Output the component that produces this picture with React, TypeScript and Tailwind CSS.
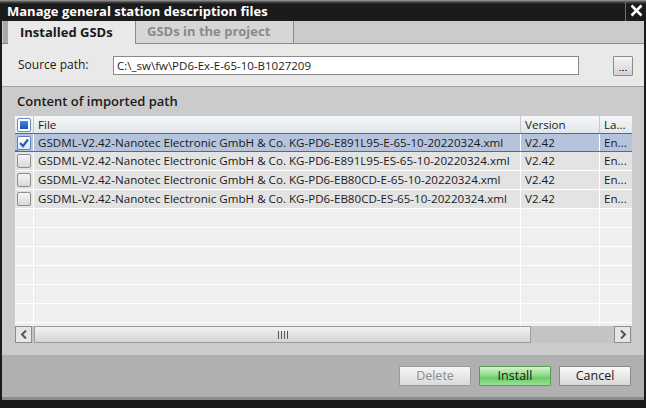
import React from "react";

const rows = [
  "GSDML-V2.42-Nanotec Electronic GmbH & Co. KG-PD6-E891L95-E-65-10-20220324.xml",
  "GSDML-V2.42-Nanotec Electronic GmbH & Co. KG-PD6-E891L95-ES-65-10-20220324.xml",
  "GSDML-V2.42-Nanotec Electronic GmbH & Co. KG-PD6-EB80CD-E-65-10-20220324.xml",
  "GSDML-V2.42-Nanotec Electronic GmbH & Co. KG-PD6-EB80CD-ES-65-10-20220324.xml",
];

function Box({ checked }: { checked?: boolean }) {
  return (
    <div
      className={
        "w-[14px] h-[14px] rounded-[2px] border flex items-center justify-center " +
        (checked
          ? "border-[#5a7fbf] bg-[linear-gradient(#ffffff,#dfe6f2)]"
          : "border-[#8e8e8e] bg-[linear-gradient(#f6f6f6,#d9d9d9)]")
      }
    >
      {checked && (
        <svg width="12" height="12" viewBox="0 0 12 12">
          <path d="M2 6 L5 9 L10 2.5" fill="none" stroke="#2a5db8" strokeWidth="2.2" />
        </svg>
      )}
    </div>
  );
}

export default function App() {
  const empty = Array.from({ length: 7 });
  return (
    <div className="w-[646px] h-[408px] bg-[#1b1b1b] flex flex-col overflow-hidden font-['Open_Sans',sans-serif] text-[#1a1a1a]">
      {/* title bar */}
      <div className="h-[21px] flex bg-[linear-gradient(#a0a0a0_0px,#4a4a4a_2px,#1b1b1b_4px)]">
        <div className="pl-[7px] text-white font-bold text-[13px] leading-[22px]">
          Manage general station description files
        </div>
        <div className="ml-auto w-[21px] border-l border-[#707070] flex items-center justify-center">
          <svg width="13" height="13" viewBox="0 0 13 13">
            <path d="M1.5 1.5 L11.5 11.5 M11.5 1.5 L1.5 11.5" stroke="#ffffff" strokeWidth="2.6" />
          </svg>
        </div>
      </div>

      <div className="flex flex-col border-l-2 border-r-2 border-[#1b1b1b]">
        {/* tabs */}
        <div className="h-[23px] flex bg-[#cbcbcb]">
          <div className="w-[1px] border-b border-[#8a8a8a]" />
          <div className="w-[5px] bg-[#a9a9a9] border-b border-[#8a8a8a]" />
          <div className="w-[128px] bg-[#e9e9e9] border-r border-[#8a8a8a] text-[13px] font-bold flex items-center pl-[12px] pt-[1px]">
            Installed GSDs
          </div>
          <div className="w-[158px] bg-[#d6d6d6] border-r border-b border-[#8a8a8a] text-[13px] font-bold text-[#8a8a8a] flex items-center pl-[11px]">
            GSDs in the project
          </div>
          <div className="flex-1 border-b border-[#8a8a8a]" />
        </div>

        {/* source path */}
        <div className="h-[42px] bg-[#e9e9e9] flex items-center pl-[16px]">
          <div className="w-[95px] text-[12px]">Source path:</div>
          <div className="w-[466px] h-[19px] bg-white border border-[#8a8a8a] text-[11.5px] leading-[17px] pl-[3px]">
            C:\_sw\fw\PD6-Ex-E-65-10-B1027209
          </div>
          <div className="ml-[34px] mt-[2px] w-[20px] h-[20px] border border-[#8c8c8c] rounded-[1px] bg-[linear-gradient(#f6f6f6,#d2d2d2)] flex items-end justify-center pb-[4px]">
            <div className="flex gap-[1px]">
              <div className="w-[2px] h-[1px] bg-[#c04040]" />
              <div className="w-[2px] h-[1px] bg-[#404040]" />
              <div className="w-[2px] h-[1px] bg-[#4040c0]" />
            </div>
          </div>
        </div>

        {/* section */}
        <div className="h-[269px] bg-[#cbcbcb] border-t border-[#a3a3a3] flex flex-col">
          <div className="h-[29px] pl-[15px] flex items-center text-[13px] font-semibold">
            Content of imported path
          </div>
          <div className="ml-[13px] w-[617px] flex flex-col">
            {/* header */}
            <div className="h-[17px] flex bg-[linear-gradient(#f5f7f9,#e2e6ea)] text-[11.6px] leading-[17px]">
              <div className="w-[19px] flex items-center justify-center border-r border-[#c4c8cc]">
                <div className="w-[14px] h-[14px] rounded-[2px] border border-[#6a8cc6] bg-white flex items-center justify-center">
                  <div className="w-[8px] h-[8px] bg-[linear-gradient(#4c86e0,#1a52b8)]" />
                </div>
              </div>
              <div className="w-[487px] pl-[4px] border-r border-[#c4c8cc]">File</div>
              <div className="w-[79px] pl-[4px] border-r border-[#c4c8cc]">Version</div>
              <div className="flex-1 pl-[4px]">La...</div>
            </div>
            {/* body */}
            <div className="h-[193px] overflow-hidden bg-[#efefef] flex flex-col text-[11.6px]">
              {rows.map((r, i) => {
                const sel = i === 0;
                return (
                  <div
                    key={i}
                    className={
                      "relative h-[19px] shrink-0 flex " +
                      (sel
                        ? "bg-[#b6c3dc] border-t border-b border-[#3a6bc6]"
                        : "bg-[#e3e3e3] border-b border-white")
                    }
                  >
                    <div className="w-[19px] flex items-center justify-center border-r border-white">
                      <Box checked={sel} />
                    </div>
                    <div className="w-[487px] pl-[4px] border-r border-white flex items-center whitespace-nowrap overflow-hidden">
                      {r}
                    </div>
                    <div className="w-[79px] pl-[4px] border-r border-white flex items-center">V2.42</div>
                    <div className="flex-1 pl-[4px] flex items-center">En...</div>
                    {sel && <div className="absolute left-0 bottom-[-2px] w-[3px] h-[3px] bg-[#3a6bc6]" />}
                  </div>
                );
              })}
              {empty.map((_, i) => (
                <div key={"e" + i} className="h-[19px] shrink-0 flex border-b border-white">
                  <div className="w-[19px] border-r border-white" />
                  <div className="w-[487px] border-r border-white" />
                  <div className="w-[79px] border-r border-white" />
                  <div className="flex-1" />
                </div>
              ))}
            </div>
            {/* scrollbar */}
            <div className="h-[17px] flex bg-[#c4c4c4]">
              <div className="w-[17px] h-[17px] border border-[#8c8c8c] bg-[#e6e6e6] flex items-center justify-center">
                <svg width="8" height="9" viewBox="0 0 8 9">
                  <path d="M6 0.5 L2 4.5 L6 8.5" fill="none" stroke="#555" strokeWidth="2" />
                </svg>
              </div>
              <div className="ml-[2px] w-[497px] h-[17px] border border-[#9c9c9c] bg-[linear-gradient(#f2f2f2,#d4d4d4)] flex items-center justify-center">
                <div className="flex gap-[2px]">
                  <div className="w-[1px] h-[8px] bg-[#555]" />
                  <div className="w-[1px] h-[8px] bg-[#555]" />
                  <div className="w-[1px] h-[8px] bg-[#555]" />
                  <div className="w-[1px] h-[8px] bg-[#555]" />
                </div>
              </div>
              <div className="flex-1" />
              <div className="w-[17px] h-[17px] border border-[#8c8c8c] bg-[#e6e6e6] flex items-center justify-center">
                <svg width="8" height="9" viewBox="0 0 8 9">
                  <path d="M2 0.5 L6 4.5 L2 8.5" fill="none" stroke="#555" strokeWidth="2" />
                </svg>
              </div>
              <div className="w-[1px]" />
            </div>
          </div>
        </div>

        {/* buttons */}
        <div className="h-[45px] bg-[#b0b0b0] border-b-[3px] border-[#8c8c8c] flex justify-end gap-[8px] pt-[11px] pr-[13px] text-[12.5px]">
          <div className="w-[72px] h-[20px] border border-[#9a9a9a] rounded-[1px] bg-[linear-gradient(#f6f6f6,#dadada)] text-[#8c8c8c] flex items-center justify-center">
            Delete
          </div>
          <div className="w-[72px] h-[20px] border border-[#5a9a5a] rounded-[1px] bg-[linear-gradient(#d4f4cc,#90dc8a_45%,#6ccc68_60%,#9ae098)] text-[#1a1a1a] flex items-center justify-center">
            Install
          </div>
          <div className="w-[72px] h-[20px] border border-[#8a8a8a] rounded-[1px] bg-[linear-gradient(#fafafa,#d8d8d8)] text-[#1a1a1a] flex items-center justify-center">
            Cancel
          </div>
        </div>
      </div>
      <div className="flex-1" />
    </div>
  );
}
